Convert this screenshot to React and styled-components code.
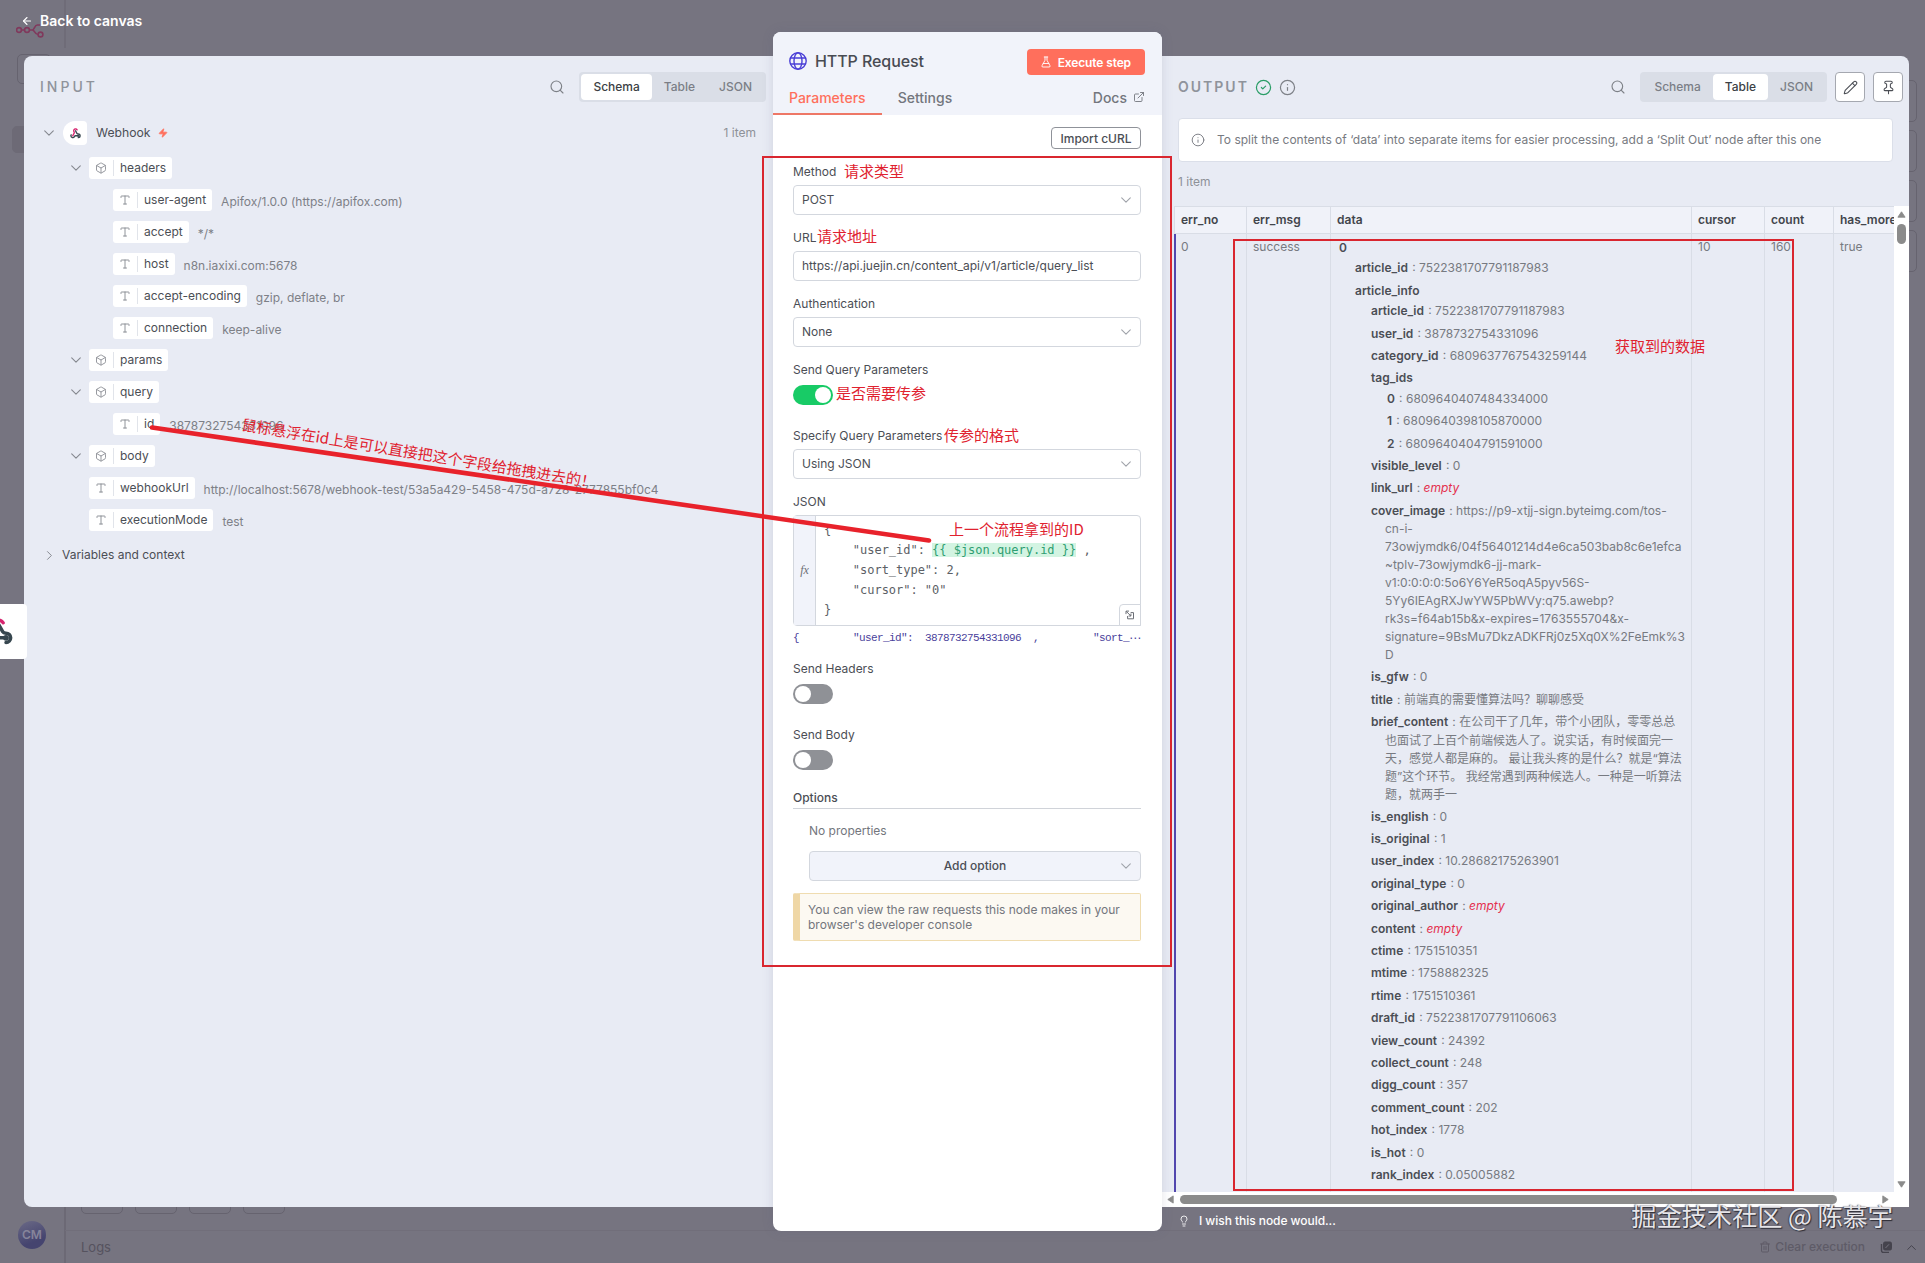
import React from "react";
import styled, { createGlobalStyle } from "styled-components";
import {
  ArrowLeft,
  Box,
  CircleCheck,
  ExternalLink,
  FlaskConical,
  Info,
  Lightbulb,
  Pencil,
  Pin,
  Search,
  Trash2,
  Type,
  Zap,
} from "lucide-react";

const GlobalStyle = createGlobalStyle`
  * {
    box-sizing: border-box;
  }
  body {
    margin: 0;
    background: #767480;
    overflow: hidden;
    font-family: Inter, "Noto Sans CJK SC", sans-serif;
    font-size: 12px;
    line-height: 18px;
    color: #4b4e55;
  }
`;

const Screen = styled.div`
  position: relative;
  width: 1925px;
  height: 1263px;
  display: flex;
  flex-direction: column;
  overflow: hidden;
  background: #767480;
`;

/* ---------- dimmed canvas behind the modal ---------- */

const Backdrop = styled.div`
  position: absolute;
  inset: 0;
`;

const Ghost = styled.div`
  position: absolute;
  left: ${(p) => p.$x}px;
  top: ${(p) => p.$y}px;
  width: ${(p) => p.$w}px;
  height: ${(p) => p.$h}px;
  border: 1px solid ${(p) => p.$line || "#66636f"};
  border-radius: ${(p) => (p.$r === undefined ? 5 : p.$r)}px;
  background: ${(p) => p.$bg || "transparent"};
`;

const GhostLogo = styled.svg`
  position: absolute;
  left: 16px;
  top: 22px;
`;

const Avatar = styled.div`
  position: absolute;
  left: 18px;
  top: 1221px;
  width: 28px;
  height: 28px;
  border-radius: 50%;
  background: linear-gradient(160deg, #6b6a86, #45446f 70%);
  color: #86849a;
  font-weight: 600;
  line-height: 28px;
  text-align: center;
`;

const LogsBar = styled.div`
  position: absolute;
  left: 65px;
  right: 0;
  top: 1230px;
  height: 33px;
  padding: 0 9px 0 16px;
  display: flex;
  align-items: center;
  justify-content: space-between;
  color: #55525e;
  font-size: 13px;
  border-top: 1px solid #716e7a;
`;

const LogsActions = styled.div`
  display: flex;
  align-items: center;
  gap: 4px;
  font-size: 12px;
  font-weight: 500;
  color: #5e5b67;
`;

const LogsIcon = styled.svg`
  margin: 0 11px 0 11px;
`;

/* ---------- modal ---------- */

const BackLink = styled.div`
  position: relative;
  height: 56px;
  flex: none;
  padding: 10px 0 0 21px;
  display: flex;
  align-items: flex-start;
  gap: 7px;
  color: #fff;
  font-size: 14px;
  font-weight: 600;
  line-height: 22px;
  svg {
    margin-top: 5px;
  }
`;

const Modal = styled.div`
  position: relative;
  flex: none;
  display: flex;
  height: 1151px;
  margin: 0 16px 0 24px;
`;

const Panel = styled.section`
  width: ${(p) => p.$width}px;
  flex: none;
  display: flex;
  flex-direction: column;
  background: #e8ebf4;
  border-radius: ${(p) => p.$radius};
`;

const PanelHeader = styled.header`
  display: flex;
  align-items: center;
  height: 30px;
  margin: 16px ${(p) => p.$right}px 0 16px;
  color: #7d8087;
`;

const PanelTitle = styled.h2`
  margin: 0;
  font-size: 14px;
  font-weight: ${(p) => p.$weight};
  letter-spacing: ${(p) => p.$spacing}px;
  color: #8f939b;
`;

const StatusIcons = styled.div`
  display: flex;
  gap: 7px;
  margin-left: 6px;
`;

const HeaderTools = styled.div`
  display: flex;
  align-items: center;
  margin-left: auto;
`;

const TabGroup = styled.div`
  display: flex;
  height: 30px;
  padding: 2px;
  margin-left: 14px;
  border-radius: 4px;
  background: #dadee7;
`;

const TabButton = styled.button`
  height: 26px;
  padding: 0 12px;
  border: 0;
  border-radius: 4px;
  font: 500 12px/26px Inter, sans-serif;
  color: ${(p) => (p.$active ? "#3c3f45" : "#7b7e86")};
  background: ${(p) => (p.$active ? "#fff" : "transparent")};
`;

const SquareButton = styled.button`
  width: 30px;
  height: 30px;
  padding: 0;
  margin-left: 8px;
  display: flex;
  align-items: center;
  justify-content: center;
  border: 1px solid #a5a8b0;
  border-radius: 4px;
  background: #fff;
  color: #4b4e55;
`;

/* ---------- input schema ---------- */

const NodeRow = styled.div`
  display: flex;
  align-items: center;
  height: 24px;
  margin: 19px 17px 12px 20px;
`;

const NodeBadge = styled.div`
  width: 24px;
  height: 24px;
  margin: 0 9px 0 9px;
  display: flex;
  align-items: center;
  justify-content: center;
  background: #fff;
  border-radius: 12px 4px 4px 12px;
`;

const NodeName = styled.span`
  font-size: 12.2px;
  margin-right: 8px;
`;

const ItemCount = styled.span`
  color: #8e9198;
  margin-left: ${(p) => (p.$end ? "auto" : "0")};
`;

const SchemaRow = styled.div`
  display: flex;
  align-items: center;
  height: 22px;
  margin-bottom: 10px;
  padding-left: ${(p) => (p.$level === 2 ? 89 : 47)}px;
`;

const Toggle = styled.span`
  width: 18px;
  height: 22px;
  display: flex;
  align-items: center;
  justify-content: flex-start;
`;

const Pill = styled.div`
  display: flex;
  align-items: center;
  height: 22px;
  padding-right: 6px;
  border-radius: 3px;
  background: #fff;
`;

const PillIcon = styled.span`
  width: 25px;
  height: 16px;
  margin-right: 6px;
  display: flex;
  align-items: center;
  justify-content: center;
  border-right: 1px solid #e1e4ea;
  color: #85888f;
`;

const FieldValue = styled.span`
  margin: 3px 0 0 9px;
  color: #7d8087;
`;

const VariablesRow = styled.div`
  display: flex;
  align-items: center;
  gap: 8px;
  margin: 5px 0 0 21px;
`;

/* ---------- node settings ---------- */

const NodePanel = styled.section`
  position: relative;
  width: 389px;
  flex: none;
  margin: -24px 0;
  display: flex;
  flex-direction: column;
  background: #fff;
  border-radius: 8px;
  overflow: hidden;
  box-shadow: 0 0 12px rgba(80, 90, 120, 0.16);
`;

const NodeHeader = styled.header`
  height: 83px;
  flex: none;
  padding: 17px 16px 0;
  background: #f1f3fa;
`;

const TitleLine = styled.div`
  display: flex;
  align-items: center;
  height: 26px;
  > svg {
    margin-bottom: 3px;
  }
  h1 {
    margin: 0 auto 2px 8px;
    font-size: 16px;
    font-weight: 450;
    letter-spacing: -0.08px;
    color: #484b52;
  }
`;

const ExecuteButton = styled.button`
  display: flex;
  align-items: center;
  gap: 6px;
  height: 26px;
  padding: 0 14px 0 13px;
  margin-right: 1px;
  border: 0;
  border-radius: 4px;
  background: #ff6f5c;
  color: #fff;
  font: 600 12px Inter, sans-serif;
  letter-spacing: -0.12px;
`;

const NodeTabs = styled.nav`
  display: flex;
  margin: 7px 1px 0 -16px;
  height: 33px;
  font-size: 14px;
  font-weight: 500;
  line-height: 32px;
  color: #73767d;
`;

const NodeTab = styled.span`
  padding: 0 16px;
  border-bottom: ${(p) => (p.$active ? "2px solid #ee7766" : "0")};
  color: ${(p) => (p.$active ? "#ff6f5c" : "inherit")};
`;

const DocsLink = styled.span`
  margin-left: auto;
  display: flex;
  align-items: center;
  height: 31px;
  gap: 6px;
  svg {
    margin-bottom: 2px;
  }
`;

const Form = styled.div`
  padding: 12px 21px 0 20px;
  display: flex;
  flex-direction: column;
`;

const ImportButton = styled.button`
  align-self: flex-end;
  width: 90px;
  height: 22px;
  margin-bottom: 14px;
  padding: 0;
  border: 1px solid #8f9299;
  border-radius: 4px;
  background: #fff;
  color: #4b4e55;
  font: 500 12px Inter, sans-serif;
`;

const Label = styled.label`
  display: block;
  height: 18px;
  font-size: 12px;
`;

const Control = styled.div`
  display: flex;
  align-items: center;
  justify-content: space-between;
  height: 30px;
  margin: 4px 0 14px;
  padding: 0 9px 0 8px;
  border: 1px solid #d3d7de;
  border-radius: 4px;
`;

const Switch = styled.div`
  width: 40px;
  height: 20px;
  margin: 6px 0 22px;
  padding: 2px;
  display: flex;
  justify-content: ${(p) => (p.$on ? "flex-end" : "flex-start")};
  border-radius: 10px;
  background: ${(p) => (p.$on ? "#18cb66" : "#8f9196")};
  &::after {
    content: "";
    width: 16px;
    height: 16px;
    border-radius: 50%;
    background: #fff;
  }
`;

const Editor = styled.div`
  position: relative;
  display: flex;
  height: 111px;
  margin-top: 4px;
  border: 1px solid #d3d7de;
  border-radius: 4px 4px 0 4px;
`;

const Gutter = styled.div`
  width: 22px;
  display: flex;
  align-items: center;
  justify-content: center;
  border-right: 1px solid #d3d7de;
  background: #f1f3fa;
  font: italic 12px "Liberation Serif", serif;
  color: #6c6f76;
`;

const Code = styled.pre`
  margin: 4px 0 0 8px;
  font: 12px/20px "DejaVu Sans Mono", monospace;
  letter-spacing: -0.02px;
  color: #5c5f66;
`;

const Expression = styled.span`
  background: #d3f4e2;
  color: #2f9f72;
`;

const ExpandCorner = styled.div`
  position: absolute;
  right: -1px;
  bottom: -1px;
  width: 22px;
  height: 22px;
  display: flex;
  align-items: center;
  justify-content: center;
  border: 1px solid #d3d7de;
  border-radius: 4px 0 0 0;
  background: #fff;
`;

const Preview = styled.div`
  display: flex;
  height: 18px;
  margin: 3px 0 13px;
  white-space: pre;
  font: 11px/18px "Liberation Mono", monospace;
  letter-spacing: -0.6px;
  color: #4a3f9c;
`;

const Ellipsis = styled.span`
  font-family: "DejaVu Sans", sans-serif;
  font-size: 12px;
`;

const OptionsTitle = styled.div`
  margin: -3px 0 0;
  height: 20px;
  font-weight: 500;
  border-bottom: 1px solid #d0d3d9;
`;

const OptionsBody = styled.div`
  padding-left: 16px;
  p {
    margin: 13px 0 11px;
    color: #73767d;
  }
`;

const AddOption = styled(Control)`
  justify-content: flex-end;
  margin: 0 0 12px;
  background: #f1f3fa;
  span {
    flex: 1;
    text-align: center;
    padding-left: 11px;
    font-weight: 450;
  }
`;

const Notice = styled.div`
  height: 48px;
  padding: 8px 7px 0 8px;
  border: 1px solid #efdcb0;
  border-left: 7px solid #efd7a6;
  border-radius: 2px;
  background: #fcf9f2;
  color: #73767d;
  line-height: 15px;
`;

/* ---------- output table ---------- */

const Hint = styled.div`
  display: flex;
  align-items: center;
  gap: 12px;
  height: 44px;
  margin: 16px 16px 11px;
  padding: 0 12px;
  border: 1px solid #dbdfe9;
  border-radius: 4px;
  background: #fff;
  color: #777a81;
`;

const CountLine = styled(ItemCount)`
  display: block;
  margin-left: 16px;
`;

const TableArea = styled.div`
  flex: 1;
  min-height: 0;
  margin-top: 15px;
  display: flex;
`;

const TableColumn = styled.div`
  width: 732px;
  display: flex;
  flex-direction: column;
`;

const Table = styled.div`
  height: 986px;
  margin-left: 12px;
  display: grid;
  grid-template-columns: 72px 84px 361px 73px 69px 61px;
  grid-template-rows: 28px 1fr;
  overflow: hidden;
`;

const HeadCell = styled.div`
  padding-left: 6px;
  font-weight: 600;
  line-height: 25px;
  color: #42454c;
  background: #f0f2f9;
  border: 1px solid #d9dde6;
  border-width: 1px 0 1px 1px;
  overflow: hidden;
`;

const Cell = styled.div`
  padding: 4px 0 0 ${(p) => (p.$first ? 5 : 6)}px;
  border-left: ${(p) => (p.$first ? "2px solid #5247ae" : "1px solid #d9dde6")};
  color: #777a81;
  overflow: hidden;
`;

const Entry = styled.div`
  padding-left: 14px;
  text-indent: -14px;
  margin-bottom: 3px;
  white-space: nowrap;
`;

const Key = styled.span`
  display: inline-block;
  margin-right: 0.8px;
  text-indent: 0;
  line-height: 19.4px;
  font-weight: 600;
  color: #4b4e55;
`;

const Group = styled.div`
  margin-left: ${(p) => (p.$root ? 2 : 16)}px;
  ${Entry} + & {
    margin-top: -2px;
  }
`;

const Empty = styled.em`
  color: #e4304f;
`;

const LineRest = styled.span`
  white-space: pre;
`;

const ScrollX = styled.div`
  height: 15px;
  display: flex;
  align-items: center;
  background: #fff;
  padding: 0 4px;
  justify-content: space-between;
`;

const ThumbX = styled.div`
  width: 657px;
  height: 9px;
  margin: 0 auto 0 5px;
  border-radius: 5px;
  background: #8b8b8b;
`;

const ScrollY = styled.div`
  width: 15px;
  display: flex;
  flex-direction: column;
  align-items: center;
  padding: 4px 0 18px;
  background: #fff;
`;

const ThumbY = styled.div`
  width: 9px;
  height: 20px;
  margin: 5px 0 auto;
  border-radius: 5px;
  background: #8b8b8b;
`;

const Footer = styled.footer`
  position: relative;
  display: flex;
  align-items: center;
  gap: 9px;
  height: 28px;
  padding-left: 1178px;
  color: #fff;
  font-weight: 500;
  letter-spacing: -0.05px;
`;

/* ---------- overlays ---------- */

const SideTab = styled.div`
  position: absolute;
  left: -20px;
  top: 604px;
  width: 47px;
  height: 55px;
  padding: 14px 0 0 5px;
  background: #fff;
  border-radius: 4px;
`;

const Frame = styled.div`
  position: absolute;
  left: ${(p) => p.$x}px;
  top: ${(p) => p.$y}px;
  width: ${(p) => p.$w}px;
  height: ${(p) => p.$h}px;
  border: 2px solid #d9262f;
`;

const Note = styled.div`
  position: absolute;
  left: ${(p) => p.$x}px;
  top: ${(p) => p.$y}px;
  font: 15px/22px "Noto Sans CJK SC", sans-serif;
  color: #e0222f;
  white-space: nowrap;
  transform-origin: 0 50%;
  transform: rotate(${(p) => p.$angle || 0}deg);
`;

const Arrow = styled.svg`
  position: absolute;
  left: 0;
  top: 0;
  pointer-events: none;
`;

const Watermark = styled.div`
  position: absolute;
  right: 32px;
  top: 1197px;
  font: 25.2px/36px "Noto Sans CJK SC", sans-serif;
  color: #e6e5e9;
  text-shadow: 1px 1px 1px #2c2b33, -1px 0 1px rgba(50, 48, 58, 0.7);
  white-space: nowrap;
`;

const Chevron = ({ size = 10, color = "#a0a3aa", rotate = 0 }) => (
  <svg
    width={size}
    height={size}
    viewBox="0 0 10 10"
    fill="none"
    stroke={color}
    strokeWidth="1.1"
    strokeLinecap="round"
    strokeLinejoin="round"
    transform={`rotate(${rotate})`}
  >
    <path d="M.7 2.8 5 7.1l4.3-4.3" />
  </svg>
);

const WebhookIcon = ({ size, width = 3 }) => (
  <svg
    width={size}
    height={size}
    viewBox="0 0 24 24"
    fill="none"
    stroke="#37474f"
    strokeWidth={width}
    strokeLinecap="round"
  >
    <path d="M18 16.98h-5.99c-1.1 0-1.95.94-2.48 1.9A4 4 0 0 1 2 17c.01-.7.2-1.4.57-2" />
    <path d="m12 6 3.13 5.73C15.66 12.7 16.9 13 18 13a4 4 0 0 1 0 8" />
    <path
      d="m6 17 3.13-5.78c.53-.97.1-2.18-.5-3.1a4 4 0 1 1 6.89-4.06"
      stroke="#d6256f"
    />
    <circle cx="18" cy="17" r="1" />
  </svg>
);

const GlobeIcon = () => (
  <svg width="18" height="18" viewBox="0 0 18 18" fill="none" stroke="#4a3fd6" strokeWidth="1.4">
    <circle cx="9" cy="9" r="8.2" />
    <ellipse cx="9" cy="9" rx="4" ry="8.2" />
    <path d="M1.4 6h15.2M1.4 12h15.2" />
  </svg>
);

const ExpandIcon = () => (
  <svg width="10" height="10" viewBox="0 0 10 10" fill="none" stroke="#6c6f76">
    <path d="M5.6 2.6h2.9v6.2H2.6V6M1 4.1V1.1h3M1.2 1.3l4.6 4.6M5.9 3.6v2.4H3.6" />
  </svg>
);

const Triangle = ({ points }) => (
  <svg width="9" height="9" viewBox="0 0 10 10" fill="#8b8b8b" stroke="#8b8b8b" strokeLinejoin="round">
    <polygon points={points} />
  </svg>
);

const views = ["Schema", "Table", "JSON"];

const ViewTabs = ({ active }) => (
  <TabGroup>
    {views.map((view) => (
      <TabButton key={view} $active={view === active}>
        {view}
      </TabButton>
    ))}
  </TabGroup>
);

const schema = [
  { name: "headers", object: true },
  { name: "user-agent", value: "Apifox/1.0.0 (https://apifox.com)", level: 2 },
  { name: "accept", value: "*/*", level: 2 },
  { name: "host", value: "n8n.iaxixi.com:5678", level: 2 },
  { name: "accept-encoding", value: "gzip, deflate, br", level: 2 },
  { name: "connection", value: "keep-alive", level: 2 },
  { name: "params", object: true },
  { name: "query", object: true },
  { name: "id", value: "3878732754331096", level: 2 },
  { name: "body", object: true },
  {
    name: "webhookUrl",
    value: "http://localhost:5678/webhook-test/53a5a429-5458-475d-a728-2777855bf0c4",
  },
  { name: "executionMode", value: "test" },
];

const InputPanel = () => (
  <Panel $width={749} $radius="8px 0 0 8px">
    <PanelHeader $right={7}>
      <PanelTitle $weight={500} $spacing={3}>
        INPUT
      </PanelTitle>
      <HeaderTools>
        <Search size={16} strokeWidth={1.7} />
        <ViewTabs active="Schema" />
      </HeaderTools>
    </PanelHeader>
    <NodeRow>
      <Chevron color="#85888f" />
      <NodeBadge>
        <WebhookIcon size={11} />
      </NodeBadge>
      <NodeName>Webhook</NodeName>
      <Zap size={10} color="#ff6f5c" fill="#ff6f5c" />
      <ItemCount $end>1 item</ItemCount>
    </NodeRow>
    {schema.map(({ name, value, object, level }) => (
      <SchemaRow key={name} $level={level}>
        {level !== 2 && (
          <Toggle>{object && <Chevron size={10} color="#85888f" />}</Toggle>
        )}
        <Pill>
          <PillIcon>
            {object ? (
              <Box size={12} strokeWidth={1.7} />
            ) : (
              <Type size={12} strokeWidth={1.8} />
            )}
          </PillIcon>
          {name}
        </Pill>
        {value && <FieldValue>{value}</FieldValue>}
      </SchemaRow>
    ))}
    <VariablesRow>
      <Chevron color="#85888f" rotate={-90} size={9} />
      Variables and context
    </VariablesRow>
  </Panel>
);

const SelectField = ({ label, value, plain }) => (
  <>
    <Label>{label}</Label>
    <Control>
      {value}
      {!plain && <Chevron />}
    </Control>
  </>
);

const SwitchField = ({ label, on }) => (
  <>
    <Label>{label}</Label>
    <Switch $on={on} />
  </>
);

const SettingsPanel = () => (
  <NodePanel>
    <NodeHeader>
      <TitleLine>
        <GlobeIcon />
        <h1>HTTP Request</h1>
        <ExecuteButton>
          <FlaskConical size={12} strokeWidth={1.8} />
          Execute step
        </ExecuteButton>
      </TitleLine>
      <NodeTabs>
        <NodeTab $active>Parameters</NodeTab>
        <NodeTab>Settings</NodeTab>
        <DocsLink>
          Docs <ExternalLink size={12} strokeWidth={1.8} />
        </DocsLink>
      </NodeTabs>
    </NodeHeader>
    <Form>
      <ImportButton>Import cURL</ImportButton>
      <SelectField label="Method" value="POST" />
      <SelectField
        label="URL"
        value="https://api.juejin.cn/content_api/v1/article/query_list"
        plain
      />
      <SelectField label="Authentication" value="None" />
      <SwitchField label="Send Query Parameters" on />
      <SelectField label="Specify Query Parameters" value="Using JSON" />
      <Label>JSON</Label>
      <Editor>
        <Gutter>fx</Gutter>
        <Code>
          {'{\n    "user_id": '}
          <Expression>{"{{ $json.query.id }}"}</Expression>
          {' ,\n    "sort_type": 2,\n    "cursor": "0"\n}'}
        </Code>
        <ExpandCorner>
          <ExpandIcon />
        </ExpandCorner>
      </Editor>
      <Preview>
        {'{         "user_id":  3878732754331096  ,         "sort_'}
        <Ellipsis>⋯</Ellipsis>
      </Preview>
      <SwitchField label="Send Headers" />
      <SwitchField label="Send Body" />
      <OptionsTitle>Options</OptionsTitle>
      <OptionsBody>
        <p>No properties</p>
        <AddOption>
          <span>Add option</span>
          <Chevron />
        </AddOption>
      </OptionsBody>
      <Notice>
        You can view the raw requests this node makes in your browser's
        developer console
      </Notice>
    </Form>
  </NodePanel>
);

const coverImage = [
  "https://p9-xtjj-sign.byteimg.com/tos-",
  "cn-i-",
  "73owjymdk6/04f56401214d4e6ca503bab8c6e1efca",
  "~tplv-73owjymdk6-jj-mark-",
  "v1:0:0:0:0:5o6Y6YeR5oqA5pyv56S-",
  "5Yy6IEAgRXJwYW5PbWVy:q75.awebp?",
  "rk3s=f64ab15b&x-expires=1763555704&x-",
  "signature=9BsMu7DkzADKFRj0z5Xq0X%2FeEmk%3",
  "D",
];

const brief = [
  "在公司干了几年，带个小团队，零零总总",
  "也面试了上百个前端候选人了。说实话，有时候面完一",
  "天，感觉人都是麻的。 最让我头疼的是什么？就是“算法",
  "题”这个环节。 我经常遇到两种候选人。一种是一听算法",
  "题，就两手一",
];

const data = [
  [
    "0",
    [
      ["article_id", "7522381707791187983"],
      [
        "article_info",
        [
          ["article_id", "7522381707791187983"],
          ["user_id", "3878732754331096"],
          ["category_id", "6809637767543259144"],
          [
            "tag_ids",
            [
              ["0", "6809640407484334000"],
              ["1", "6809640398105870000"],
              ["2", "6809640404791591000"],
            ],
          ],
          ["visible_level", "0"],
          ["link_url", ""],
          ["cover_image", coverImage.join("\n")],
          ["is_gfw", "0"],
          ["title", "前端真的需要懂算法吗？聊聊感受"],
          ["brief_content", brief.join("\n")],
          ["is_english", "0"],
          ["is_original", "1"],
          ["user_index", "10.28682175263901"],
          ["original_type", "0"],
          ["original_author", ""],
          ["content", ""],
          ["ctime", "1751510351"],
          ["mtime", "1758882325"],
          ["rtime", "1751510361"],
          ["draft_id", "7522381707791106063"],
          ["view_count", "24392"],
          ["collect_count", "248"],
          ["digg_count", "357"],
          ["comment_count", "202"],
          ["hot_index", "1778"],
          ["is_hot", "0"],
          ["rank_index", "0.05005882"],
        ],
      ],
    ],
  ],
];

const Tree = ({ entries, root }) => (
  <Group $root={root}>
    {entries.map(([name, value]) =>
      Array.isArray(value) ? (
        <React.Fragment key={name}>
          <Entry>
            <Key>{name}</Key>
          </Entry>
          <Tree entries={value} />
        </React.Fragment>
      ) : (
        <Entry key={name}>
          <Key>{name}</Key>
          {" : "}
          {value === "" && <Empty>empty</Empty>}
          {value.split("\n").map((line, i) => (
            <React.Fragment key={i}>
              {i > 0 && <br />}
              {i > 0 ? <LineRest>{line}</LineRest> : line}
            </React.Fragment>
          ))}
        </Entry>
      )
    )}
  </Group>
);

const columns = ["err_no", "err_msg", "data", "cursor", "count", "has_more"];

const OutputPanel = () => (
  <Panel $width={747} $radius="0 8px 0 0">
    <PanelHeader $right={6}>
      <PanelTitle $weight={600} $spacing={2}>
        OUTPUT
      </PanelTitle>
      <StatusIcons>
        <CircleCheck size={17} strokeWidth={1.7} color="#2a9d67" />
        <Info size={17} strokeWidth={1.7} />
      </StatusIcons>
      <HeaderTools>
        <Search size={16} strokeWidth={1.7} />
        <ViewTabs active="Table" />
        <SquareButton>
          <Pencil size={15} strokeWidth={1.7} />
        </SquareButton>
        <SquareButton>
          <Pin size={15} strokeWidth={1.7} />
        </SquareButton>
      </HeaderTools>
    </PanelHeader>
    <Hint>
      <Info size={14} strokeWidth={1.6} />
      To split the contents of ‘data’ into separate items for easier
      processing, add a ‘Split Out’ node after this one
    </Hint>
    <CountLine>1 item</CountLine>
    <TableArea>
      <TableColumn>
        <Table>
          {columns.map((name) => (
            <HeadCell key={name}>{name}</HeadCell>
          ))}
          <Cell $first>0</Cell>
          <Cell>success</Cell>
          <Cell>
            <Tree entries={data} root />
          </Cell>
          <Cell>10</Cell>
          <Cell>160</Cell>
          <Cell>true</Cell>
        </Table>
        <ScrollX>
          <Triangle points="8,1 8,9 2,5" />
          <ThumbX />
          <Triangle points="2,1 2,9 8,5" />
        </ScrollX>
      </TableColumn>
      <ScrollY>
        <Triangle points="1,8 9,8 5,2" />
        <ThumbY />
        <Triangle points="1,2 9,2 5,8" />
      </ScrollY>
    </TableArea>
  </Panel>
);

const CanvasBehind = () => (
  <Backdrop>
    <GhostLogo width="30" height="18" viewBox="0 0 30 18" fill="none" stroke="#80395c" strokeWidth="1.6">
      <circle cx="3" cy="8" r="2.4" />
      <circle cx="11" cy="8" r="2.4" />
      <circle cx="24.5" cy="12.5" r="2.4" />
      <path d="M5.4 8h3M13.4 8h3c2 0 2-5 5-5h3M16.4 8c2.5 0 2 4.5 5.5 4.5" />
    </GhostLogo>
    <Ghost $x={64} $y={0} $w={1} $h={48} $r={0} $line="#6f6c78" />
    <Ghost $x={17} $y={54} $w={34} $h={30} />
    <Ghost $x={12} $y={126} $w={30} $h={27} $line="#6d6a76" $bg="#6d6a76" />
    {[80, 130, 180, 230].map((y) => (
      <Ghost key={y} $x={1875} $y={y} $w={42} $h={42} />
    ))}
    {[81, 135, 189, 243].map((x) => (
      <Ghost key={x} $x={x} $y={1172} $w={42} $h={42} />
    ))}
    <Ghost $x={64} $y={1207} $w={1} $h={56} $r={0} $line="#6c6975" />
    <Avatar>CM</Avatar>
    <LogsBar>
      Logs
      <LogsActions>
        <Trash2 size={12} />
        Clear execution
        <LogsIcon width="12" height="12" viewBox="0 0 12 12" fill="none" stroke="#45434d">
          <rect x="3.5" y="1" width="8" height="8" rx="1.5" fill="#45434d" />
          <path d="M1.5 3v6.5a2 2 0 0 0 2 2H9" strokeWidth="1.4" />
          <path d="M5.5 7 9 3.3" stroke="#767480" />
        </LogsIcon>
        <Chevron rotate={180} size={9} color="#45434d" />
      </LogsActions>
    </LogsBar>
  </Backdrop>
);

const App = () => (
  <>
    <GlobalStyle />
    <Screen>
      <CanvasBehind />
      <BackLink>
        <ArrowLeft size={12} strokeWidth={2.2} />
        Back to canvas
      </BackLink>
      <Modal>
        <InputPanel />
        <SettingsPanel />
        <OutputPanel />
      </Modal>
      <Footer>
        <Lightbulb size={12} strokeWidth={1.7} />
        I wish this node would...
      </Footer>
      <SideTab>
        <WebhookIcon size={28} width={3} />
      </SideTab>
      <Frame $x={762} $y={156} $w={410} $h={811} />
      <Frame $x={1233} $y={239} $w={561} $h={952} />
      <Note $x={844} $y={160}>请求类型</Note>
      <Note $x={817} $y={225}>请求地址</Note>
      <Note $x={836} $y={382}>是否需要传参</Note>
      <Note $x={944} $y={424}>传参的格式</Note>
      <Note $x={949} $y={518}>上一个流程拿到的ID</Note>
      <Note $x={1615} $y={335}>获取到的数据</Note>
      <Note $x={242} $y={413} $angle={9.3}>
        鼠标悬浮在id上是可以直接把这个字段给拖拽进去的！
      </Note>
      <Arrow width="1925" height="1263">
        <line x1="152" y1="427.5" x2="929" y2="540.5" stroke="#e8222b" strokeWidth="4.6" strokeLinecap="round" />
      </Arrow>
      <Watermark>掘金技术社区 @ 陈慕宇</Watermark>
    </Screen>
  </>
);

export default App;
